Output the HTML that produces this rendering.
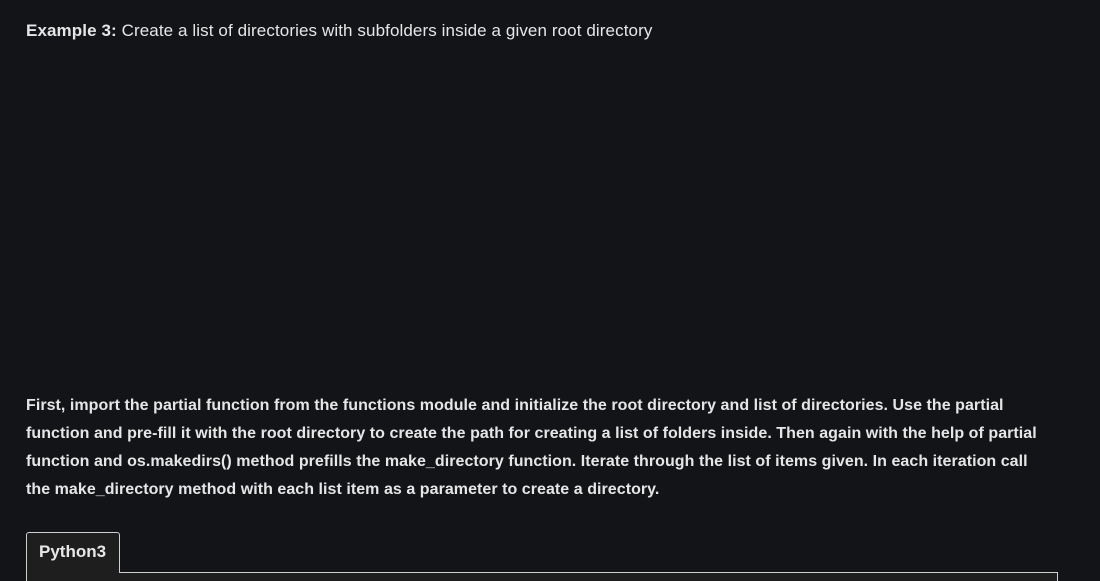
<!DOCTYPE html>
<html><head><style>
html,body{margin:0;padding:0;background:#131417;width:1100px;height:581px;overflow:hidden}
body{font-family:"Liberation Sans",sans-serif;color:#e6e6e6;position:relative}
.t{position:absolute;left:26px;top:21px;font-size:17px;letter-spacing:0.1px;white-space:nowrap}
.p{position:absolute;left:26px;top:392px;width:1070px;font-size:16px;line-height:28px;letter-spacing:0.05px;font-weight:bold}
.p div{white-space:nowrap}
.tab{position:absolute;left:26px;top:532px;width:94px;height:41px;background:#1e1e1e;border:1px solid #cfcfcf;border-bottom:none;border-radius:3px 3px 0 0;box-sizing:border-box;font-size:17px;font-weight:bold;padding:9px 0 0 12px;color:#e8e8e8;z-index:2}
.box{position:absolute;left:26px;top:572px;width:1032px;height:20px;border:1px solid #cfcfcf;box-sizing:border-box;background:#1e1e1e}
</style></head><body>
<div class="t"><b>Example 3:</b> Create a list of directories with subfolders inside a given root directory</div>
<div class="p">
<div>First, import the partial function from the functions module and initialize the root directory and list of directories. Use the partial</div>
<div>function and pre-fill it with the root directory to create the path for creating a list of folders inside. Then again with the help of partial</div>
<div>function and os.makedirs() method prefills the make_directory function. Iterate through the list of items given. In each iteration call</div>
<div>the make_directory method with each list item as a parameter to create a directory.</div>
</div>
<div class="box"></div>
<div class="tab">Python3</div>
</body></html>
